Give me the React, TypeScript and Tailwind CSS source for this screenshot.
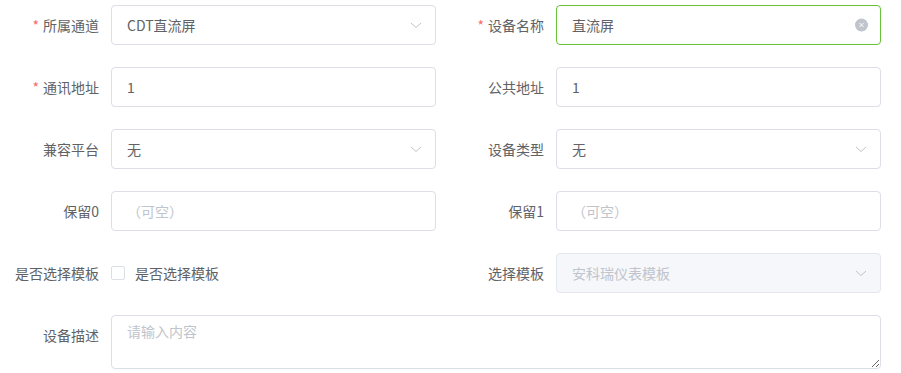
import React from 'react';

const font = { fontFamily: '"Noto Sans CJK SC", "Liberation Sans", sans-serif' };

const Label: React.FC<{ text: string; required?: boolean }> = ({ text, required }) => (
  <label className="w-[111px] shrink-0 pr-3 text-right text-[14px] leading-[40px] text-[#606266]">
    {required && <span className="mr-1 text-[#f56c6c]">*</span>}
    {text}
  </label>
);

const Chevron: React.FC = () => (
  <svg className="absolute right-[12px] top-1/2 -translate-y-1/2" width="14" height="14" viewBox="0 0 14 14">
    <path d="M2 5 L7 9.5 L12 5" fill="none" stroke="#c0c4cc" strokeWidth="1" />
  </svg>
);

const Box: React.FC<{
  value?: string;
  placeholder?: string;
  select?: boolean;
  clear?: boolean;
  focused?: boolean;
  disabled?: boolean;
}> = ({ value, placeholder, select, clear, focused, disabled }) => (
  <div
    className={`relative h-10 w-[325px] rounded-[4px] border pl-[15px] pr-[30px] text-[14px] leading-[38px] ${
      focused ? 'border-[#67c23a]' : disabled ? 'border-[#e4e7ed]' : 'border-[#dcdfe6]'
    } ${disabled ? 'bg-[#f5f7fa]' : 'bg-white'}`}
  >
    {value ? (
      <span className={disabled ? 'text-[#c0c4cc]' : 'text-[#606266]'}>{value}</span>
    ) : (
      <span className="text-[#c0c4cc]">{placeholder}</span>
    )}
    {select && <Chevron />}
    {clear && (
      <span className="absolute right-[12px] top-1/2 flex h-[13px] w-[13px] -translate-y-1/2 items-center justify-center rounded-full bg-[#c0c4cc]">
        <svg width="7" height="7" viewBox="0 0 7 7">
          <path d="M1.5 1.5 L5.5 5.5 M5.5 1.5 L1.5 5.5" stroke="#fff" strokeWidth="1" />
        </svg>
      </span>
    )}
  </div>
);

const Field: React.FC<{ label: string; required?: boolean; children: React.ReactNode }> = ({
  label,
  required,
  children,
}) => (
  <div className="flex w-[436px] items-start">
    <Label text={label} required={required} />
    {children}
  </div>
);

export default function App() {
  return (
    <div className="min-h-screen bg-white pt-[5px]" style={font}>
      <div className="flex flex-col gap-[22px]">
        <div className="flex gap-[9px]">
          <Field label="所属通道" required>
            <Box value="CDT直流屏" select />
          </Field>
          <Field label="设备名称" required>
            <Box value="直流屏" clear focused />
          </Field>
        </div>
        <div className="flex gap-[9px]">
          <Field label="通讯地址" required>
            <Box value="1" />
          </Field>
          <Field label="公共地址">
            <Box value="1" />
          </Field>
        </div>
        <div className="flex gap-[9px]">
          <Field label="兼容平台">
            <Box value="无" select />
          </Field>
          <Field label="设备类型">
            <Box value="无" select />
          </Field>
        </div>
        <div className="flex gap-[9px]">
          <Field label="保留0">
            <Box placeholder="（可空）" />
          </Field>
          <Field label="保留1">
            <Box placeholder="（可空）" />
          </Field>
        </div>
        <div className="flex gap-[9px]">
          <Field label="是否选择模板">
            <div className="flex h-10 items-center">
              <span className="h-[14px] w-[14px] rounded-[2px] border border-[#dcdfe6] bg-white" />
              <span className="pl-[10px] text-[14px] text-[#606266]">是否选择模板</span>
            </div>
          </Field>
          <Field label="选择模板">
            <Box value="安科瑞仪表模板" select disabled />
          </Field>
        </div>
        <div className="flex">
          <Label text="设备描述" />
          <textarea
            rows={2}
            placeholder="请输入内容"
            className="h-[54px] w-[770px] rounded-[4px] border border-[#dcdfe6] px-[15px] py-[5px] text-[14px] leading-[21px] text-[#606266] outline-none placeholder:text-[#c0c4cc]"
            style={font}
          />
        </div>
      </div>
    </div>
  );
}
